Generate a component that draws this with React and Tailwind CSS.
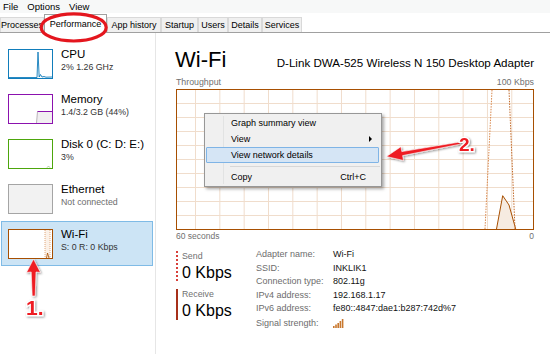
import React from "react";

const Thumb = ({ color, bg = "bg-white", children }) => (
  <div className={`w-[45px] h-[30px] border ${color} ${bg} shrink-0`}>
    <svg width="43" height="28" viewBox="0 0 43 28" className="block">
      {children}
    </svg>
  </div>
);

const SideItem = ({ thumb, title, sub, subClass = "text-[#333]", selected }) => (
  <div
    className={`w-[152px] h-[45px] flex border pl-[6px] pt-[7px] ${
      selected ? "bg-[#cce4f5] border-[#7fbbe6]" : "border-transparent"
    }`}
  >
    {thumb}
    <div className="ml-[8px] -mt-[2px] flex flex-col">
      <div className="text-[11.5px] leading-[14px] text-black">{title}</div>
      <div className={`text-[8.8px] leading-[11px] mt-[1px] ${subClass}`}>{sub}</div>
    </div>
  </div>
);

const Tab = ({ w, children, selected }) =>
  selected ? (
    <div
      className={`${w} h-[19px] -mb-px bg-white border border-b-0 border-[#a0a0a0] flex items-center justify-center text-[9px] leading-none`}
    >
      {children}
    </div>
  ) : (
    <div
      className={`${w} h-[15px] bg-[#f0f0f0] border border-b-0 border-[#d9d9d9] flex items-center justify-center text-[9px] leading-none`}
    >
      {children}
    </div>
  );

const Row = ({ label, children, cls = "h-[13.5px]" }) => (
  <div className={`flex items-center ${cls}`}>
    <div className="w-[77px] text-[#6d6d6d]">{label}</div>
    <div className="text-[#111]">{children}</div>
  </div>
);

export default function App() {
  const vlines = [];
  for (let i = 0; i < 15; i++) vlines.push(18.5 + i * 24.33);
  const hlines = [];
  for (let i = 1; i < 10; i++) hlines.push(i * 14 - 0.5);

  return (
    <div className="w-[550px] h-[354px] relative overflow-hidden bg-white text-black font-['Liberation_Sans',Arial,sans-serif]">
      {/* menu bar */}
      <div className="h-[13px] bg-[#f7f8f8] flex items-center pl-[3px] text-[9.5px] leading-none">
        <span>File</span>
        <span className="ml-[9px]">Options</span>
        <span className="ml-[9px]">View</span>
      </div>
      {/* tabs */}
      <div className="h-[20px] flex items-end border-b border-[#a0a0a0]">
        <Tab w="w-[44px]">Processes</Tab>
        <Tab w="w-[63px]" selected>
          Performance
        </Tab>
        <Tab w="w-[54px]">App history</Tab>
        <Tab w="w-[37px]">Startup</Tab>
        <Tab w="w-[30px]">Users</Tab>
        <Tab w="w-[34px]">Details</Tab>
        <Tab w="w-[40px]">Services</Tab>
      </div>

      <div className="flex h-[321px]">
        {/* sidebar */}
        <div className="w-[156px] border-r border-[#e6e6e6] pt-[8px] pl-px flex flex-col">
          <SideItem
            title="CPU"
            sub="2% 1.26 GHz"
            thumb={
              <Thumb color="border-[#117dbb]">
                <polyline
                  points="0,27.5 28,27.5 29,2 30.2,27 31.5,24.5 33,27 35,26.5 37,27.2 43,27"
                  fill="#f1f6fa"
                  stroke="#117dbb"
                  strokeWidth="0.9"
                />
              </Thumb>
            }
          />
          <SideItem
            title="Memory"
            sub="1.4/3.2 GB (44%)"
            thumb={
              <Thumb color="border-[#8b12ae]">
                <polygon points="27.5,28 28.5,16.5 43,16.5 43,28" fill="#f1eff1" />
                <line x1="27.5" y1="28" x2="28.5" y2="16.5" stroke="#a9a2aa" strokeWidth="0.8" />
                <line x1="28.5" y1="16.5" x2="43" y2="16.5" stroke="#8b12ae" strokeWidth="1" />
              </Thumb>
            }
          />
          <SideItem
            title="Disk 0 (C: D: E:)"
            sub="3%"
            thumb={
              <Thumb color="border-[#4da60c]">
                <polyline points="38,27.7 39.5,26 41,27.7" fill="none" stroke="#9bbf86" strokeWidth="0.8" />
              </Thumb>
            }
          />
          <SideItem
            title="Ethernet"
            sub="Not connected"
            subClass="text-[#6d6d6d]"
            thumb={<Thumb color="border-[#a5a5a5]" bg="bg-[#f2f2f2]" />}
          />
          <SideItem
            selected
            title="Wi-Fi"
            sub="S: 0 R: 0 Kbps"
            thumb={
              <Thumb color="border-[#a74f01]">
                <rect x="36" y="0" width="5" height="28" fill="#fbf1e8" />
                <line x1="36" y1="0" x2="36" y2="28" stroke="#d9955f" strokeWidth="0.8" strokeDasharray="1 1" />
                <line x1="41" y1="0" x2="41" y2="28" stroke="#d9955f" strokeWidth="0.8" strokeDasharray="1 1" />
                <polyline points="37.5,28 38.5,23 40,28" fill="none" stroke="#a74f01" strokeWidth="0.8" />
              </Thumb>
            }
          />
        </div>

        {/* right panel */}
        <div className="flex-1 pl-[20px] pr-[16px] pt-[14px] flex flex-col">
          <div className="flex items-baseline justify-between h-[26px]">
            <span className="text-[22px] leading-[26px] -ml-[1px]">Wi-Fi</span>
            <span className="text-[11.6px] leading-[26px]">D-Link DWA-525 Wireless N 150 Desktop Adapter</span>
          </div>
          <div className="flex justify-between mt-[4px] text-[8.8px] leading-[11px] text-[#707070]">
            <span>Throughput</span>
            <span>100 Kbps</span>
          </div>
          <div className="mt-[1px] h-[141px] border border-[#a74f01] bg-white">
            <svg width="356" height="139" viewBox="0 0 356 139" className="block">
              {vlines.map((x) => (
                <line key={"v" + x} x1={x} y1="0" x2={x} y2="139" stroke="#f0ddcc" strokeWidth="1" />
              ))}
              {hlines.map((y) => (
                <line key={"h" + y} x1="0" y1={y} x2="356" y2={y} stroke="#f0ddcc" strokeWidth="1" />
              ))}
              <polygon points="319.5,139 325.7,105.7 332,115 338.7,139" fill="#f6ebe1" />
              <polyline
                points="319.5,139 325.7,105.7 332,115 338.7,139"
                fill="none"
                stroke="#a74f01"
                strokeWidth="1"
              />
              <polyline
                points="308,139 315,0"
                fill="none"
                stroke="#d8874c"
                strokeWidth="1"
                strokeDasharray="1.5 1.2"
              />
              <polyline
                points="332,0 338,139"
                fill="none"
                stroke="#c26a2a"
                strokeWidth="1"
                strokeDasharray="1.5 1.2"
              />
            </svg>
          </div>
          <div className="flex justify-between mt-[1px] text-[8.5px] leading-[11px] text-[#707070]">
            <span>60 seconds</span>
            <span>0</span>
          </div>

          <div className="flex mt-[6px]">
            <div className="w-[80px] pt-[3px] flex flex-col">
              <div className="h-[30px] border-l-2 border-dotted border-[#d8403a] pl-[4px]">
                <div className="text-[8.8px] leading-[10px] text-[#707070]">Send</div>
                <div className="text-[16px] leading-[20px] mt-[2px]">0 Kbps</div>
              </div>
              <div className="h-[31px] mt-[8px] border-l-2 border-[#a7301a] pl-[4px]">
                <div className="text-[8.8px] leading-[10px] text-[#707070]">Receive</div>
                <div className="text-[16px] leading-[20px] mt-[2px]">0 Kbps</div>
              </div>
            </div>
            <div className="flex flex-col text-[9px] leading-none">
              <Row label="Adapter name:">Wi-Fi</Row>
              <Row label="SSID:">INKLIK1</Row>
              <Row label="Connection type:">802.11g</Row>
              <Row label="IPv4 address:">192.168.1.17</Row>
              <Row label="IPv6 address:">fe80::4847:dae1:b287:742d%7</Row>
              <Row label="Signal strength:" cls="h-[14px] mt-[0.5px]">
                <svg width="12" height="9" viewBox="0 0 12 9" className="block">
                  <rect x="0" y="7" width="1.6" height="2" fill="#c8782f" />
                  <rect x="2.2" y="5.5" width="1.6" height="3.5" fill="#c8782f" />
                  <rect x="4.4" y="4" width="1.6" height="5" fill="#c8782f" />
                  <rect x="6.6" y="2" width="1.6" height="7" fill="#c8782f" />
                  <rect x="8.8" y="0" width="1.6" height="9" fill="#c8782f" />
                </svg>
              </Row>
            </div>
          </div>
        </div>
      </div>

      {/* context menu */}
      <div className="absolute left-[204px] top-[113px] w-[178px] h-[74px] bg-[#f0f0f0] border border-[#979797] p-px shadow-[2px_2px_3px_rgba(0,0,0,0.35)] text-[9px] leading-none">
        <div className="absolute left-[18px] top-[2px] bottom-[2px] w-px bg-[#e2e3e3]" />
        <div className="relative h-[16px] flex items-center pl-[25px]">Graph summary view</div>
        <div className="relative h-[16px] flex items-center pl-[25px] justify-between pr-[8px]">
          <span>View</span>
          <span className="w-0 h-0 border-y-[3px] border-y-transparent border-l-[3px] border-l-black" />
        </div>
        <div className="relative h-[16px] flex items-center pl-[24px] bg-[#d5e5f5] border border-[#7fb4e6] rounded-[1px] mr-[1px]">
          View network details
        </div>
        <div className="relative h-[6px] flex items-center ml-[24px]">
          <div className="w-full h-px bg-[#d7d7d7]" />
        </div>
        <div className="relative h-[16px] flex items-center pl-[25px] justify-between pr-[14px]">
          <span>Copy</span>
          <span>Ctrl+C</span>
        </div>
      </div>

      {/* annotations */}
      <svg
        className="absolute inset-0 pointer-events-none"
        width="550"
        height="354"
        viewBox="0 0 550 354"
      >
        <defs>
          <filter id="sh" x="-20%" y="-20%" width="140%" height="140%">
            <feDropShadow dx="1" dy="1" stdDeviation="0.8" floodColor="#000" floodOpacity="0.45" />
          </filter>
        </defs>
        <ellipse cx="73.7" cy="27.4" rx="32.5" ry="13.6" fill="none" stroke="#e4161e" strokeWidth="3.2" />
        <polygon
          points="33.5,259 26.5,272.5 31.2,272 32.2,296 35.2,296 36,272 40.5,272.5"
          fill="#ee1c24"
          stroke="#fff"
          strokeWidth="0.6"
          filter="url(#sh)"
        />
        <polygon
          points="386.5,156.5 400.9,146.7 401.8,151.6 459.8,142 460.2,144.2 402.6,155.6 403.5,160.5"
          fill="#ee1c24"
          stroke="#fff"
          strokeWidth="0.6"
          filter="url(#sh)"
        />
        <text
          x="26"
          y="314.5"
          fontSize="21"
          fontWeight="bold"
          fontFamily="Liberation Sans, Arial, sans-serif"
          fill="#ee1c24"
          stroke="#fff"
          strokeWidth="2.5"
          paintOrder="stroke"
          filter="url(#sh)"
        >
          1.
        </text>
        <text
          x="459"
          y="151"
          fontSize="19"
          fontWeight="bold"
          fontFamily="Liberation Sans, Arial, sans-serif"
          fill="#ee1c24"
          stroke="#fff"
          strokeWidth="2.5"
          paintOrder="stroke"
          filter="url(#sh)"
        >
          2.
        </text>
      </svg>
    </div>
  );
}
